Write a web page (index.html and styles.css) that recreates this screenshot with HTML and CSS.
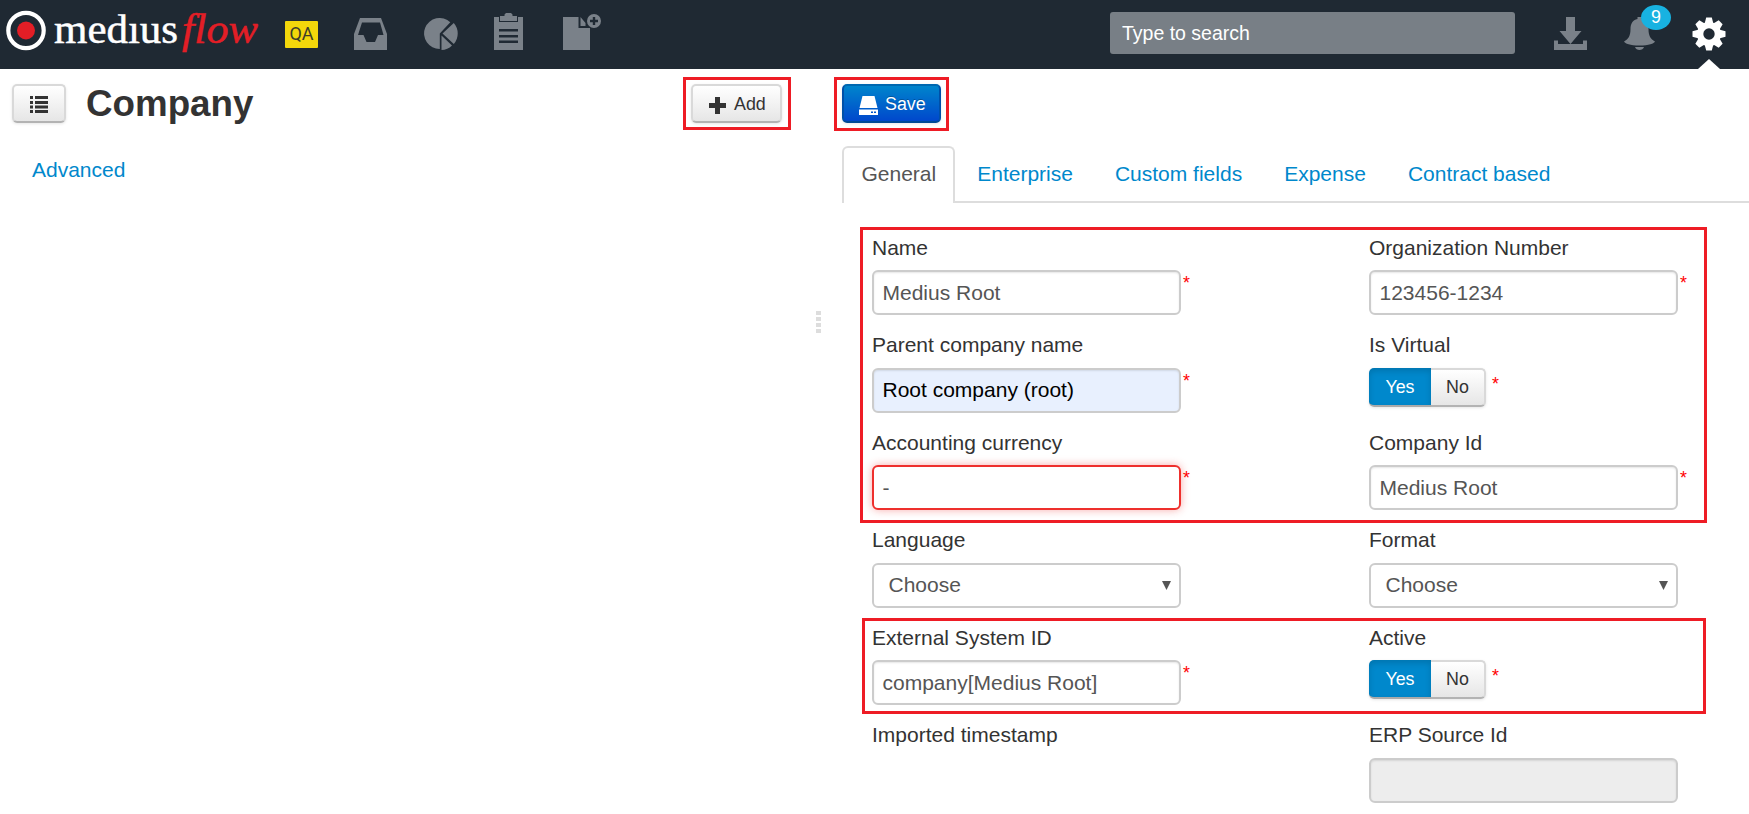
FILE: index.html
```html
<!DOCTYPE html>
<html lang="en">
<head>
<meta charset="utf-8">
<title>Company</title>
<link rel="stylesheet" href="styles.css">
</head>
<body>
<header class="topbar">
  <svg class="logo" width="262" height="69" viewBox="0 0 262 69">
    <circle cx="26" cy="30.5" r="17.7" fill="none" stroke="#fff" stroke-width="4.2"/>
    <circle cx="26" cy="30.5" r="9" fill="#e31e26"/>
    <text class="logo-word" x="54" y="43" textLength="124" lengthAdjust="spacingAndGlyphs" fill="#fff" stroke="#fff">medıus</text>
    <text class="logo-word logo-flow" x="182" y="43" textLength="76" lengthAdjust="spacingAndGlyphs" fill="#e31e26" stroke="#e31e26">flow</text>
  </svg>
  <span class="env">QA</span>
  <nav class="apps">
    <svg width="33" height="32" viewBox="0 0 33 32" fill="#7a8189"><path fill-rule="evenodd" d="M6 0h21l6 16v16H0V16zM8 4.500L4 17h5.500l3 7h8.500l3-7H29.500L26 4.500z"/></svg>
    <svg width="34" height="32" viewBox="0 0 34 32" fill="#7a8189"><path d="M15.800 15.500V31A15.500 15.500 0 1 1 26.300 4.300zM18.500 15.500L29.800 5A16 16 0 0 1 29.800 26zM17.500 17.500l10.500 10A15 15 0 0 1 17.500 32z"/></svg>
    <svg width="29" height="37" viewBox="0 0 29 37" fill="#7a8189"><path fill-rule="evenodd" d="M0 4h5v5h19V4h5v33H0zM5 16v2.500h19V16zM5 22v2.500h19V22zM5 27.500V30h19v-2.500z"/><path d="M6 3h4.500V1.500L12 0h5l1.500 1.500V3H23v5H6z"/></svg>
    <svg width="38" height="37" viewBox="0 0 38 37" fill="#7a8189"><path d="M0 4h15.500v11H27v22H0zM17.500 4l5 6v3h-5z"/><path fill-rule="evenodd" d="M31 1a7 7 0 1 1 0 14 7 7 0 0 1 0-14zM29.800 4v2.800H27v2.400h2.800V12h2.400V9.200H35V6.800h-2.800V4z"/></svg>
  </nav>
  <div class="search">Type to search</div>
  <div class="tools">
    <svg width="33" height="33" viewBox="0 0 33 33" fill="#7a8189"><path d="M12 0h9v14h6.500L16.500 27 5.500 14H12zM0 23.500h4V27h25v-3.500h4V33H0z"/></svg>
    <div class="bell">
      <svg width="31" height="33" viewBox="0 0 31 33" fill="#7a8189"><path d="M13.500 0h4v2c5 1 7 5 7 10 0 7 2 10 6.500 12.500-1 2-6 4-15.500 4S1 26.500 0 24.500C4.500 22 6.500 19 6.500 12c0-5 2-9 7-10zM11 30h9c-1 4-8 4-9 0z"/></svg>
      <span class="count">9</span>
    </div>
    <div class="gear">
      <svg width="34" height="34" viewBox="-17 -17 34 34"><g fill="#fff"><circle r="12"/><path id="tooth" d="M-4.500-10L-2.800-16.500h5.600L4.500-10v20L2.800 16.500h-5.600L-4.500 10z"/><use href="#tooth" transform="rotate(45)"/><use href="#tooth" transform="rotate(90)"/><use href="#tooth" transform="rotate(135)"/></g><circle r="5.700" fill="#1f2933"/></svg>
      <span class="pointer"></span>
    </div>
  </div>
</header>

<main class="panes">
  <section class="left">
    <div class="titlebar">
      <button class="btn list-btn"><svg width="18" height="18" viewBox="0 0 18 18" fill="#333"><path d="M0 0h3v3H0zM5 0h13v3H5zM0 5h3v3H0zM5 5h13v3H5zM0 9.500h3v3H0zM5 9.500h13v3H5zM0 14h3v3H0zM5 14h13v3H5z"/></svg></button>
      <h1>Company</h1>
      <div class="marked add-mark">
        <button class="btn add-btn"><svg width="17" height="17" viewBox="0 0 17 17" fill="#333"><path d="M6 0h5v6h6v5h-6v6H6v-6H0V6h6z"/></svg>Add</button>
      </div>
    </div>
    <a class="link">Advanced</a>
  </section>
  <div class="splitter"><i></i><i></i><i></i><i></i></div>
  <section class="right">
    <div class="marked save-mark">
      <button class="btn save-btn"><svg width="19" height="19" viewBox="0 0 19 19" fill="#fff"><path d="M3.500 0h12L18.500 12H.5z"/><path fill-rule="evenodd" d="M0 13.500h19V19H0zM12 15.500v1.500h2v-1.500zM15 15.500v1.500h2v-1.500z"/></svg>Save</button>
    </div>
    <nav class="tabs">
      <a class="tab active">General</a><a class="tab">Enterprise</a><a class="tab">Custom fields</a><a class="tab">Expense</a><a class="tab">Contract based</a>
    </nav>
    <form class="fields">
      <span class="box box-main"></span>
      <span class="box box-ext"></span>
      <div class="field"><label>Name</label><div class="row"><div class="input">Medius Root</div><em>*</em></div></div>
      <div class="field"><label>Organization Number</label><div class="row"><div class="input">123456-1234</div><em>*</em></div></div>
      <div class="field"><label>Parent company name</label><div class="row"><div class="input filled">Root company (root)</div><em>*</em></div></div>
      <div class="field"><label>Is Virtual</label><div class="row"><div class="toggle"><span class="on">Yes</span><span class="off">No</span></div><em class="far">*</em></div></div>
      <div class="field"><label>Accounting currency</label><div class="row"><div class="input error">-</div><em>*</em></div></div>
      <div class="field"><label>Company Id</label><div class="row"><div class="input">Medius Root</div><em>*</em></div></div>
      <div class="field"><label>Language</label><div class="row"><div class="input select">Choose<svg width="9" height="9" viewBox="0 0 9 9"><path d="M0 0h9L4.500 9z" fill="#555"/></svg></div></div></div>
      <div class="field"><label>Format</label><div class="row"><div class="input select">Choose<svg width="9" height="9" viewBox="0 0 9 9"><path d="M0 0h9L4.500 9z" fill="#555"/></svg></div></div></div>
      <div class="field"><label>External System ID</label><div class="row"><div class="input">company[Medius Root]</div><em>*</em></div></div>
      <div class="field"><label>Active</label><div class="row"><div class="toggle"><span class="on">Yes</span><span class="off">No</span></div><em class="far">*</em></div></div>
      <div class="field"><label>Imported timestamp</label></div>
      <div class="field"><label>ERP Source Id</label><div class="row"><div class="input disabled"></div></div></div>
    </form>
  </section>
</main>
</body>
</html>
```
FILE: styles.css
```css
* { box-sizing: border-box; }
body {
  margin: 0;
  height: 814px;
  overflow: hidden;
  background: #fff;
  color: #333;
  font: 21px/30px "Liberation Sans", Arial, sans-serif;
}
svg { display: block; flex: none; }

/* Top bar */
.topbar { display: flex; height: 69px; background: #1f2933; }
.logo { overflow: visible; }
.logo-word { font-family: "Liberation Serif", serif; font-size: 40px; stroke-width: .5px; }
.logo-flow { font-size: 42px; font-style: italic; }
.env {
  width: 33px; height: 27px; margin: 21px 0 0 23px;
  background: #f3d70b; border-radius: 1px; color: #3d3d2a;
  font: 18px/26px Roboto, sans-serif; text-align: center;
}
.apps { display: flex; align-items: flex-end; height: 50px; margin-left: 36px; }
.apps svg + svg { margin-left: 37px; }
.apps svg:nth-child(3) { margin-left: 36px; }
.apps svg:nth-child(4) { margin-left: 40px; }
.search {
  width: 405px; height: 42px; margin: 12px 0 0 auto; padding-left: 12px;
  border-radius: 3px; background: #787f86; color: #fff;
  font-size: 19.5px; line-height: 42px;
}
.tools { display: flex; margin-left: 39px; padding: 17px 23px 0 0; }
.bell { position: relative; margin-left: 37px; }
.count {
  position: absolute; left: 17px; top: -12px;
  width: 30px; height: 25px; border-radius: 50%;
  background: #18b2e1; color: #fff;
  font-size: 17.85px; line-height: 25px; text-align: center;
}
.gear { position: relative; margin-left: 37px; }
.pointer {
  position: absolute; left: 6px; top: 42px;
  border: 11px solid transparent; border-top: 0; border-bottom: 10px solid #fff;
}

/* Panes */
.panes { display: flex; }
.left { width: 816px; padding: 15px 34px 0 12px; }
.titlebar { display: flex; height: 39px; }
h1 { margin: 0 auto 0 20px; font-size: 36.75px; line-height: 39px; }
.btn {
  display: flex; align-items: center; height: 39px;
  border: 2px solid #d9d9d9; border-bottom-color: #b3b3b3; border-radius: 5px;
  background: linear-gradient(#fff, #e6e6e6); color: #333;
  box-shadow: 0 1px 3px rgba(0, 0, 0, .1);
  font: 17.85px/30px "Liberation Sans", Arial, sans-serif;
}
.list-btn { width: 54px; padding: 2px 0 0 16px; }
.add-btn { width: 91px; padding: 0 0 0 16px; gap: 8px; }
.add-btn svg, .save-btn svg { margin-top: 3px; }
.save-btn {
  width: 99px; padding: 0 0 0 15px; gap: 7px;
  border-color: #0068b0 #0050a8 #004a96;
  background: linear-gradient(#0088cc, #0044cc); background-origin: border-box;
  color: #fff; text-shadow: 0 -1px 0 rgba(0, 0, 0, .25);
}
.marked { position: relative; }
.marked::after, .box { content: ""; position: absolute; border: 3px solid #ee1c25; pointer-events: none; }
.add-mark::after { inset: -7px -9px -7px -8px; }
.save-mark::after { inset: -7px -8px -8px; }
.link { display: inline-block; margin: 32px 0 0 20px; color: #0088cc; }
.splitter { display: flex; flex-direction: column; gap: 2px; width: 5px; padding-top: 242px; }
.splitter i { height: 4px; background: #ddd; }
.right { flex: 1; padding: 15px 0 0 21px; }
.save-mark { width: 99px; }

.tabs { display: flex; gap: 3px; margin-top: 23px; border-bottom: 2px solid #ddd; }
.tab { height: 55px; padding: 14px 19.5px 0; line-height: 28px; color: #0088cc; }
.active {
  height: 57px; margin-bottom: -2px; padding: 12px 16.500px 0 17.500px;
  border: 2px solid #ddd; border-bottom: 0; border-radius: 6px 6px 0 0;
  background: #fff; color: #555;
}

/* Form */
.fields {
  position: relative; display: grid; grid-template-columns: 497px 340px; grid-auto-rows: 97.5px;
  padding: 29.5px 0 0 30px;
}
.box-main { left: 18px; top: 24px; width: 847px; height: 296px; }
.box-ext { left: 20px; top: 415px; width: 844px; height: 96px; }
label { display: block; height: 37.5px; }
.row { display: flex; }
.input {
  display: flex; align-items: center; justify-content: space-between;
  width: 309px; height: 45px; padding: 0 8.5px;
  border: 2px solid #ccc; border-radius: 6px; background: #fff; color: #555;
  box-shadow: inset 0 1px 2px rgba(0, 0, 0, .1);
}
.filled { background: #e8f0fe; color: #000; }
.error { border-color: #ee302d; box-shadow: 0 0 9px rgba(238, 48, 45, .4); }
.select { padding: 0 8px 0 14.500px; box-shadow: none; }
.disabled { background: #ededed; }
em { margin: 0 0 0 2px; color: #f00; font-size: 17.85px; font-style: normal; line-height: 26px; }
.far { margin: 3px 0 0 6px; }
.toggle {
  display: flex; height: 39px; border-radius: 5px;
  font-size: 17.85px; line-height: 34px; text-align: center;
  box-shadow: 0 1px 3px rgba(0, 0, 0, .1);
}
.on {
  width: 62px; padding-top: 2px; border-bottom: 2px solid #aaa; border-radius: 5px 0 0 5px;
  background: #0088cc; color: #fff; box-shadow: inset 0 3px 6px rgba(0, 0, 0, .15);
}
.off {
  width: 55px; border: 2px solid #d9d9d9; border-bottom-color: #b3b3b3; border-left: 0;
  border-radius: 0 5px 5px 0; background: linear-gradient(#fff, #e6e6e6);
}
```
